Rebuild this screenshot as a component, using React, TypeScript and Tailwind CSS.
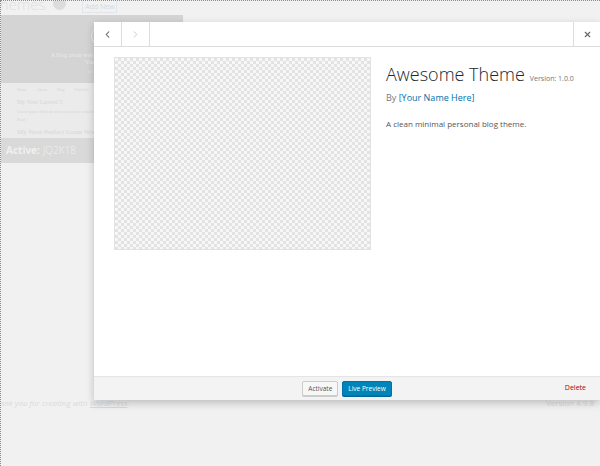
import { ChevronLeft, ChevronRight, X } from 'lucide-react';

const navItems = ['Home', 'About', 'Blog', 'Portfolio', 'Contact'];

const BackgroundPage = () => (
  <div className="w-[600px] h-[466px] bg-[#f1f1f1] border-l border-t border-dotted border-[#8a8a8a] overflow-hidden flex flex-col">
    {/* page title row */}
    <div className="h-[20px] flex items-start -mt-[6px] -ml-[9px] text-[#e0e0e0]">
      <span className="text-[15px] leading-[18px] font-light">Themes</span>
      <span className="ml-[8px] mt-[2px] w-[13px] h-[13px] rounded-full bg-[#dcdcdc]" />
      <span className="ml-[16px] mt-[5px] w-[35px] text-center text-[7px] leading-[11px] text-[#d0dbe3] border border-[#e2e6ea]">Add New</span>
    </div>

    {/* active theme card */}
    <div className="w-[182px] flex flex-col">
      <div className="h-[68px] bg-[#d4d4d4] flex flex-col items-center pt-[10px] pl-[20px]">
        <div className="w-[22px] h-[22px] rounded-full border border-[#ebebeb] flex items-center justify-center text-[8px] text-[#ebebeb] [font-family:'Liberation_Serif',serif]">
          JQ
        </div>
        <div className="mt-[5px] text-[6px] leading-[7px] text-[#ebebeb] text-center [font-family:'Liberation_Serif',serif]">
          A blog about web development and design
          <br />
          Vue.js &amp; CSS
        </div>
        <div className="mt-[3px] text-[4px] text-[#e4e4e4]">● Social ● Links</div>
      </div>
      <div className="h-[55px] bg-[#ebebeb] px-[16px] pt-[4px] flex flex-col gap-[2px] text-[#d6d6d6] [font-family:'Liberation_Serif',serif]">
        <div className="flex gap-[10px] text-[4px]">
          {navItems.map((n) => (
            <span key={n}>{n}</span>
          ))}
        </div>
        <div className="text-[6px] mt-[3px]">My New Laravel 5</div>
        <div className="text-[4px]">Lorem ipsum dolor sit amet consectetur adipiscing</div>
        <div className="text-[4px]">Read</div>
        <div className="text-[7px] mt-[2px]">My Near-Perfect Grunt Workflow</div>
        <div className="text-[4px] text-[#dddddd]">Lorem ipsum dolor sit amet consectetur adipiscing elit sed do</div>
      </div>
      <div className="h-[25px] bg-[#d9d9d9] flex items-center pl-[5px] text-[10px] text-[#f0f0f0]">
        <span className="font-bold">Active:</span>
        <span className="ml-[3px] font-light">JQ2K18</span>
      </div>
    </div>

    {/* admin footer */}
    <div className="mt-auto mb-[57px] flex justify-between text-[8px] text-[#dadada] pr-[6px]">
      <span className="italic -ml-[10px]">
        Thank you for creating with <span className="underline text-[#d4dbe0]">WordPress</span>.
      </span>
      <span>Version 4.9.8</span>
    </div>
  </div>
);

const ThemeModal = () => (
  <div className="absolute left-[94px] top-[22px] w-[506px] h-[378px] bg-white shadow-[0_3px_8px_rgba(0,0,0,0.22)] flex flex-col">
    {/* header */}
    <div className="h-[25px] border-b border-[#ddd] flex shrink-0">
      <button className="w-[28px] border-r border-[#ddd] flex items-center justify-center text-[#555]">
        <ChevronLeft size={11} strokeWidth={2.2} />
      </button>
      <button className="w-[28px] border-r border-[#ddd] flex items-center justify-center text-[#c8c8c8]">
        <ChevronRight size={11} strokeWidth={2} />
      </button>
      <div className="flex-1" />
      <button className="w-[27px] border-l border-[#ddd] flex items-center justify-center text-[#666]">
        <X size={9} strokeWidth={3} />
      </button>
    </div>

    {/* body */}
    <div className="flex-1 flex pl-[20px] pt-[10px]">
      <div className="w-[257px] h-[193px] border border-[#e2e2e2] bg-[image:conic-gradient(#e3e3e3_25%,#f7f7f7_0_50%,#e3e3e3_0_75%,#f7f7f7_0)] bg-[length:6px_6px]" />
      <div className="ml-[15px] flex flex-col">
        <div className="flex items-baseline mt-[6px]">
          <h2 className="text-[18px] leading-[22px] font-light text-[#23282d]">Awesome Theme</h2>
          <span className="ml-[5px] text-[7px] text-[#72777c]">Version: 1.0.0</span>
        </div>
        <p className="mt-[7px] text-[9px] leading-[12px] text-[#72777c]">
          By <span className="text-[#0073aa]">[Your Name Here]</span>
        </p>
        <p className="mt-[14px] text-[8px] leading-[11px] text-[#555]">A clean minimal personal blog theme.</p>
      </div>
    </div>

    {/* footer actions */}
    <div className="h-[24px] bg-[#f3f3f3] border-t border-[#e5e5e5] flex items-center justify-center gap-[4px] relative shrink-0">
      <button className="h-[15px] px-[5px] text-[6.5px] text-[#555] bg-[#f7f7f7] border border-[#ccc] rounded-[2px] shadow-[0_1px_0_#ccc]">
        Activate
      </button>
      <button className="h-[15px] px-[5px] text-[6.5px] text-white bg-[#0085ba] border border-[#0073aa] rounded-[2px] shadow-[0_1px_0_#006799]">
        Live Preview
      </button>
      <span className="absolute right-[14px] text-[7px] text-[#a00]">Delete</span>
    </div>
  </div>
);

export default function App() {
  return (
    <div className="relative w-[600px] h-[466px] overflow-hidden [font-family:'Open_Sans',sans-serif]">
      <BackgroundPage />
      <ThemeModal />
    </div>
  );
}
